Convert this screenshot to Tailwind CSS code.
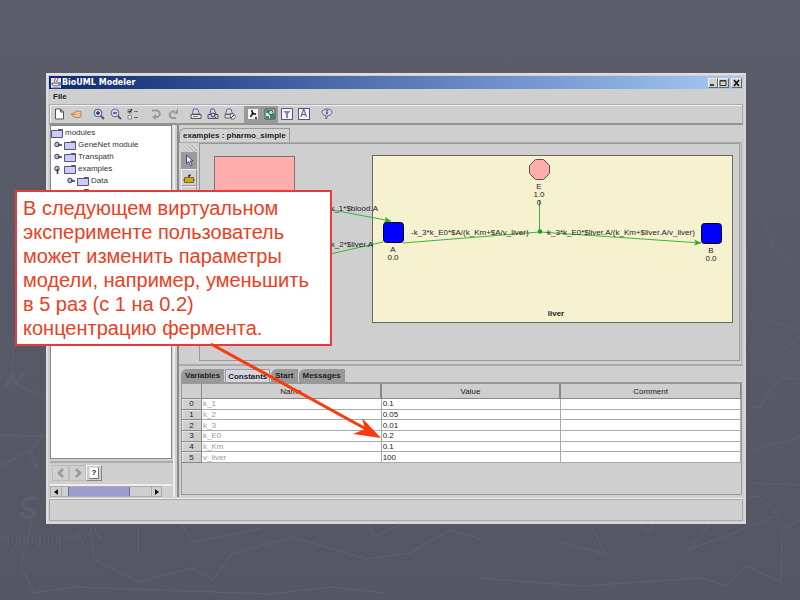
<!DOCTYPE html>
<html lang="ru">
<head>
    <meta charset="UTF-8"/>
    <meta name="viewport" content="width=device-width, initial-scale=1.0"/>
    <script src="https://cdn.jsdelivr.net/npm/@tailwindcss/browser@4"></script>
    <title>BioUML Modeler</title>
</head>
<body class="relative min-h-screen flex flex-col overflow-hidden bg-linear-to-b from-[#5c5d6b] to-[#545664] pl-[46px] pr-[54px] pt-[73px] pb-[76px] font-['Liberation_Sans',Arial,sans-serif] text-[8px] leading-[12px] text-[#222]">

<!-- Slide backdrop: faint outlines -->
<svg class="absolute inset-0 w-full h-full" viewBox="0 0 800 600" preserveAspectRatio="xMidYMid slice" fill="none" stroke="#5c5e6d" stroke-width="1.5" aria-hidden="true">
    <path d="M90 520 94 560 138 582 192 568 213 580 232 554 292 537 366 559 410 553 450 530 484 540"/>
    <path d="M138 525 138 552M180 522 193 542 262 528M366 520 374 536 402 524M592 526 605 554 560 542M640 524 648 532 654 524"/>
    <path d="M32 520 21 567 34 593 74 587 270 594 330 587 386 593M480 578 582 586 700 578 727 586 746 566 781 582 782 530 800 520"/>
    <path d="M710 524 688 550 735 532 778 515 758 496 748 497M748 483 800 485M748 452 800 437M748 408 760 407 780 378 800 379M748 352 767 342 784 349 800 338M748 312 800 330"/>
    <path d="M756 128 766 158 760 200 772 246 790 262M30 310 14 340 12 382 46 398M0 466 30 450 38 470 28 455 46 430M0 435 46 436"/>
    <path d="M0 537 8 538M12 552 20 537M40 538 38 549M60 537 60 552M78 533 84 546M95 529 102 540" />
    <path stroke-width="8" stroke-dasharray="1 3" d="M0 539Q55 545 106 526M3 368Q4 350 15 336"/>
    <path stroke-width="4" d="M36 500C34 496 22 498 23 505S35 508 34 514 22 518 21 512"/>
    <path stroke-width="3" d="M5 387 13 374 16 384 24 372"/>
</svg>

<!-- Application window -->
<main class="relative flex-1 flex flex-col bg-[#cfcfcf] border-2 border-[#dedede] border-r-[#d6d6d6] border-b-[#d6d6d6] p-px">
    <header class="flex items-center h-[13px] bg-linear-to-r from-[#0d2a70] via-[#5878b6] to-[#a6caf6] px-px">
        <svg class="w-[12px] h-[12px]" viewBox="0 0 12 12" aria-hidden="true">
            <path fill="#e4e4ea" d="M1 1h10v10H1z"/>
            <path fill="none" stroke="#c33" d="M5 0c2 2-2 3 0 5M8 1c1 1-2 2-1 4"/>
            <path fill="none" stroke="#555a88" d="M2 6h7c0 3-1 3-3 3S2 9 2 6zM9 6h2v2H9M2 11h8"/>
        </svg>
        <h1 class="flex-1 font-['DejaVu_Sans',Verdana,sans-serif] font-bold text-[8px] text-white">BioUML Modeler</h1>
        <div class="flex">
            <button aria-label="Minimize" class="w-[10px] h-[10px] bg-[#d4d0c8] border border-[#eee] border-r-[#666] border-b-[#666]"><svg viewBox="0 0 8 8"><path stroke="#111" stroke-width="1.5" d="M1 6h4"/></svg></button>
            <button aria-label="Maximize" class="w-[11px] h-[10px] bg-[#d4d0c8] border border-[#eee] border-r-[#666] border-b-[#666]"><svg class="h-full" viewBox="0 0 8 8"><path fill="none" stroke="#333" d="M1 1.5h6v5H1zM1 2h6"/></svg></button>
            <button aria-label="Close" class="ml-[2px] w-[11px] h-[10px] bg-[#d4d0c8] border border-[#eee] border-r-[#666] border-b-[#666]"><svg class="h-full" viewBox="0 0 8 8"><path stroke="#111" stroke-width="1.6" d="m2 1 5 6M7 1 2 7"/></svg></button>
        </div>
    </header>

    <nav class="h-[15px] px-1 flex items-center font-bold">
        <button>File</button>
    </nav>

    <!-- Toolbar -->
    <div class="h-[21px] flex items-center gap-[6px] border border-[#aaa] border-b-2 border-b-[#929292] shadow-[inset_1px_1px_#eee]">
        <div class="flex">
            <button aria-label="New" class="w-[17px] h-[17px] flex items-center justify-center">
                <svg class="w-[12px] h-[12px]" viewBox="0 0 12 12"><path fill="#fff" stroke="#555" d="M2.500 1h5l3 3v7h-8zM7.500 1v3h3"/></svg>
            </button>
            <button aria-label="Open" class="w-[17px] h-[17px] flex items-center justify-center">
                <svg class="w-[12px] h-[12px]" viewBox="0 0 12 12"><path fill="#f0bd8e" stroke="#a77750" stroke-width=".8" d="M1 6l4-1.500 1-1.500 5 .5V9L9 9.500H5L2.500 8z"/><path stroke="#a77750" stroke-width=".6" d="M2 6.500h4"/></svg>
            </button>
        </div>
        <div class="flex">
            <button aria-label="Zoom in" class="w-[17px] h-[17px] flex items-center justify-center">
                <svg class="w-[12px] h-[12px]" viewBox="0 0 12 12"><circle cx="5" cy="5" r="3.900" fill="#d3d3f2" stroke="#5c5c78"/><path stroke="#33336c" stroke-width="1.300" d="M3 5h4M5 3v4"/><path stroke="#54547a" stroke-width="2" d="m8 8 3 3"/></svg>
            </button>
            <button aria-label="Zoom out" class="w-[17px] h-[17px] flex items-center justify-center">
                <svg class="w-[12px] h-[12px]" viewBox="0 0 12 12"><circle cx="5" cy="5" r="3.900" fill="#d3d3f2" stroke="#6c6c84"/><path stroke="#33336c" stroke-width="1.300" d="M3 5h4"/><path stroke="#54547a" stroke-width="2" d="m8 8 3 3"/></svg>
            </button>
            <button aria-label="Options" class="w-[17px] h-[17px] flex items-center justify-center">
                <svg class="w-[12px] h-[12px]" viewBox="0 0 12 12"><path fill="#eee" stroke="#777" stroke-width=".8" d="M1 1.500h3.500V5H1zM1 7.500h3.500V11H1z"/><path fill="none" stroke="#222" stroke-width="1.200" d="m1.500 3 1.200 1.200L5 1"/><path stroke="#66668c" d="M7 3.500h4M7 9.500h4"/></svg>
            </button>
        </div>
        <div class="flex">
            <button aria-label="Undo" class="w-[17px] h-[17px] flex items-center justify-center">
                <svg class="w-[12px] h-[12px]" viewBox="0 0 12 12"><path fill="none" stroke="#999" stroke-width="2" d="M2 2.500h4.500a3.300 3.300 0 0 1 0 6.600H5"/><path fill="#999" d="M6 6v6L2 9z"/></svg>
            </button>
            <button aria-label="Redo" class="w-[17px] h-[17px] flex items-center justify-center">
                <svg class="w-[12px] h-[12px]" viewBox="0 0 12 12"><path fill="none" stroke="#999" stroke-width="2" d="M8 3.500H6a3.300 3.300 0 0 0 0 6.600h3"/><path fill="#999" d="M7 6h4V0z"/></svg>
            </button>
        </div>
        <div class="flex">
            <button aria-label="Print" class="w-[17px] h-[17px] flex items-center justify-center">
                <svg class="w-[12px] h-[12px]" viewBox="0 0 12 12"><path fill="#d6d6f6" stroke="#666684" d="M3.500 1h4l2 5h-7z"/><path fill="#e2e2e2" stroke="#555" d="M1 6.500h10v4H1z"/><path stroke="#888" d="M3 8.500h5"/></svg>
            </button>
            <button aria-label="Print preview" class="w-[17px] h-[17px] flex items-center justify-center">
                <svg class="w-[12px] h-[12px]" viewBox="0 0 12 12"><path fill="#d6d6f6" stroke="#555578" d="M4 1h3l2 5H3z"/><path fill="#ccc" stroke="#555" d="M1 6.500h10v4H1z"/><circle cx="6" cy="7" r="2" fill="#ccccf0" stroke="#446"/><path stroke="#446" d="m7 8 2 2"/></svg>
            </button>
            <button aria-label="Page setup" class="w-[17px] h-[17px] flex items-center justify-center">
                <svg class="w-[12px] h-[12px]" viewBox="0 0 12 12"><path fill="#d6d6f6" stroke="#666684" d="M3 1h4l1.500 5h-7z"/><path fill="#ddd" stroke="#666" d="M1 6.500h8v3.500H1z"/><path fill="#fff" stroke="#444" stroke-width=".8" d="M6 6h4l1.500 2.500L10 11H7z"/><path stroke="#222" d="m7 10 3-3"/></svg>
            </button>
        </div>
        <div class="flex">
            <button aria-label="Diagram" class="w-[17px] h-[17px] flex items-center justify-center bg-[#999]">
                <svg class="w-[12px] h-[12px]" viewBox="0 0 12 12"><path fill="#f2f2f2" d="M1 1h10v10H1z"/><path stroke="#888" stroke-width=".8" d="m5 3 3 3-4 2"/><path fill="#444" d="M4 2h2v2H4zM7 5h2v2H7zM3 7h2v2H3zM8 9h2v2H8z"/></svg>
            </button>
            <button aria-label="Overview" class="w-[17px] h-[17px] flex items-center justify-center bg-[#999]">
                <svg class="w-[12px] h-[12px]" viewBox="0 0 12 12"><path fill="#d8e8e0" stroke="#35583f" d="M1 1h10v10H1z"/><path fill="#3c8a5c" d="M2 2h3v3H2zM6 6h5v5H6zM2 8h3v3H2z"/><circle cx="7" cy="4.500" r="2.300" fill="#c4e0ee" stroke="#345"/></svg>
            </button>
            <button aria-label="Filter" class="w-[17px] h-[17px] flex items-center justify-center">
                <svg class="w-[12px] h-[12px]" viewBox="0 0 12 12"><path fill="#f4f4fb" stroke="#55557c" d="M.5.5h11v11H.5z"/><path fill="#8484b6" d="M2.500 3h7L7 6v4H5V6z"/></svg>
            </button>
            <button aria-label="Annotation" class="w-[17px] h-[17px] flex items-center justify-center">
                <span class="w-[12px] h-[12px] border border-[#55557c] bg-[#f4f4fb] text-[#50507c] text-[10px] leading-[10px]">A</span>
            </button>
        </div>
        <button aria-label="About" class="w-[17px] h-[17px] flex items-center justify-center">
            <svg class="w-[12px] h-[12px]" viewBox="0 0 12 12"><path fill="#d4d4ee" stroke="#626282" d="M6 1c3 0 5 1.200 5 3.200S9 7.500 7 7.500L5 11V7.500C2.500 7.300 1 6 1 4.200S3 1 6 1z"/><path stroke="#33335c" stroke-width="1.300" d="M6 2v1M6 3.600v2.600"/></svg>
        </button>
    </div>

    <div class="flex-1 flex pl-px">
        <!-- Module tree -->
        <aside class="w-[125px] flex flex-col border-r-2 border-[#eee]">
            <ul id="tree" class="flex-1 mr-px pt-px bg-white border border-[#888] overflow-hidden text-[#333]"></ul>
            <div class="h-[22px] mt-[2px] pl-[2px] flex items-center border-t-2 border-[#aaa]">
                <button aria-label="Back" class="w-[17px] h-[16px] flex items-center justify-center border border-[#bcbcbc]"><svg class="w-[10px] h-[10px]" viewBox="0 0 10 10"><path fill="none" stroke="#999" stroke-width="2.500" d="M7 1 3 5l4 4"/></svg></button>
                <button aria-label="Forward" class="w-[17px] h-[16px] flex items-center justify-center border border-[#bcbcbc]"><svg class="w-[10px] h-[10px]" viewBox="0 0 10 10"><path fill="none" stroke="#999" stroke-width="2.500" d="m3 1 4 4-4 4"/></svg></button>
                <button aria-label="Help" class="w-[16px] h-[16px] flex items-center justify-center border border-[#eee] border-r-[#888] border-b-[#888]"><span class="w-[10px] h-[12px] bg-white border border-r-[#777] border-b-[#777] border-[#ddd] font-bold leading-[10px]">?</span></button>
            </div>
            <!-- Horizontal scroll bar -->
            <div class="h-[13px] mt-px mr-px pr-[10px] flex border-t-2 border-[#eee]">
                <button aria-label="Scroll left" class="w-[12px] flex items-center justify-center border border-[#aaa]"><svg class="w-[6px] h-[6px]" viewBox="0 0 6 6"><path fill="#111" d="M5 0v6L1 3z"/></svg></button>
                <div class="flex-1 px-[6px] border-y border-[#aaa]"><div class="w-[62px] h-full bg-[#9c9cce] border-x border-[#6c6ca4]"></div></div>
                <button aria-label="Scroll right" class="w-[11px] flex items-center justify-center border border-[#aaa]"><svg class="w-[6px] h-[6px]" viewBox="0 0 6 6"><path fill="#111" d="M1 0v6l4-3z"/></svg></button>
            </div>
        </aside>

        <section class="flex-1 min-w-0 flex flex-col ml-[2px] border-l-2 border-[#8a8a8a]">
            <!-- Diagram editor -->
            <div class="pt-[3px] flex">
                <button class="h-[14px] px-[3px] bg-[#d2d2d2] font-bold border border-b-0 border-[#999] rounded-tl-md">examples : pharmo_simple</button>
            </div>
            <div class="flex-1 flex mr-px pr-px pb-[2px] border-t border-r border-[#aaa]">
                <div class="w-[20px] pl-[2px] pt-[2px] flex flex-col">
                    <div class="h-[7px] w-[16px] bg-[repeating-linear-gradient(45deg,#bbb_0_1px,#d4d4d4_1px_3px)]"></div>
                    <button aria-label="Select" class="w-[16px] h-[17px] flex items-center justify-center bg-[#9a9a9a]"><svg class="w-[12px] h-[13px]" viewBox="0 0 12 13"><path fill="#eef" stroke="#44447c" d="M3.500 1v8.500l2-1.800 2 4 1.700-.8-2-3.900H10z"/></svg></button>
                    <button aria-label="Add compartment" class="w-[16px] h-[17px] flex items-center justify-center border border-[#eee] border-r-[#999] border-b-[#999]"><svg class="w-[12px] h-[12px]" viewBox="0 0 12 12"><path fill="#d8a21c" stroke="#6a5210" stroke-width=".8" d="M1.500 5.500h9v5h-9z"/><path stroke="#6a5210" d="M0 8h2M10 8h2M5.500 5.500V3H8"/></svg></button>
                    <button aria-label="Add reaction" class="w-[16px] h-[17px] border border-[#eee] border-r-[#999] border-b-[#999]"></button>
                </div>
                <div class="flex-1 min-w-0 border border-[#999] overflow-hidden">
                    <svg class="w-full h-[216px]" font-size="8" fill="#222">
                        <defs>
                            <marker id="arrow" markerUnits="userSpaceOnUse" markerWidth="8" markerHeight="8" refX="7" refY="3.500" orient="auto"><path fill="#22a822" d="M0 0.500 7 3.500 0 6.500 2 3.500z"/></marker>
                        </defs>
                        <rect x="14.500" y="12.500" width="80" height="166" fill="#ffadad" stroke="#777"/>
                        <rect x="172.500" y="11.500" width="360" height="167" fill="#f6f2cf" stroke="#666"/>
                        <g fill="none" stroke="#36b836">
                            <path marker-end="url(#arrow)" d="M95 59 191 77"/>
                            <path d="M95 118 183 98"/>
                            <path d="M203 99 340 88"/>
                            <path marker-end="url(#arrow)" d="M340 88 501 99"/>
                            <path d="M339.500 56v32"/>
                        </g>
                        <circle cx="340" cy="87.500" r="2.200" fill="#1a9c1a"/>
                        <path fill="#ffadad" stroke="#6b4a4a" d="M335.500 15.500h8l6 6v8l-6 6h-8l-6-6v-8z" stroke-linejoin="round"/>
                        <rect x="183.500" y="78.500" width="20" height="20" rx="3" fill="#00f" stroke="#002"/>
                        <rect x="501.500" y="79.500" width="20" height="20" rx="3" fill="#00f" stroke="#002"/>
                        <g text-anchor="middle">
                            <text x="339" y="45">E</text>
                            <text x="339" y="53">1.0</text>
                            <text x="339" y="61">0</text>
                            <text x="193" y="108">A</text>
                            <text x="193" y="116">0.0</text>
                            <text x="511" y="109">B</text>
                            <text x="511" y="117">0.0</text>
                            <text x="356" y="172" font-weight="bold">liver</text>
                        </g>
                        <text x="178" y="67" text-anchor="end">k_1*$blood.A</text>
                        <text x="173" y="103" text-anchor="end">k_2*$liver.A</text>
                        <text x="211" y="91">-k_3*k_E0*$A/(k_Km+$A/v_liver)</text>
                        <text x="347" y="91">k_3*k_E0*$liver.A/(k_Km+$liver.A/v_liver)</text>
                    </svg>
                </div>
            </div>

            <!-- Simulation parameters -->
            <div class="h-[133px] flex flex-col mt-px border-t-2 border-[#aaa] pt-[3px] pl-[2px] pr-px pb-[2px]">
                <div class="flex items-end gap-px font-bold">
                    <button class="h-[13px] px-[4px] bg-[#999] rounded-tl-md">Variables</button>
                    <button class="h-[13px] px-[2px] bg-[#d6d6de] border border-[#9a9ab4] border-b-0 leading-[11px]">Constants</button>
                    <button class="h-[13px] px-[4px] bg-[#999] rounded-tl-md">Start</button>
                    <button class="h-[13px] px-[4px] bg-[#999] rounded-tl-md">Messages</button>
                </div>
                <div class="flex-1 border border-[#999] border-t-2">
                    <table class="w-full h-[79px] table-fixed border-separate border-spacing-0 leading-[9px]">
                        <thead>
                        <tr class="h-[15px]">
                            <th class="w-[20px] border-r border-b border-[#888]"></th>
                            <th class="font-normal border-r-2 border-b border-[#888]">Name</th>
                            <th class="font-normal border-r-2 border-b border-[#888]">Value</th>
                            <th class="font-normal border-r border-b border-[#888]">Comment</th>
                        </tr>
                        </thead>
                        <tbody id="constants"></tbody>
                    </table>
                </div>
            </div>
        </section>
    </div>

    <footer class="h-[22px] mt-[2px] border border-[#aaa] shadow-[0_-1px_#eee]"></footer>
</main>

<!-- Slide note and its pointer -->
<p class="absolute left-[15px] top-[190px] w-[317px] border-2 border-[#e8393b] bg-white px-[6px] pt-[4px] pb-[4px] text-[20px] leading-[24px] text-[#ea4022]">
    В следующем виртуальном<br/>эксперименте пользователь<br/>может изменить параметры<br/>модели, например, уменьшить<br/>в 5 раз (с 1 на 0.2)<br/>концентрацию фермента.
</p>
<svg class="absolute left-[200px] top-[340px] w-[190px] h-[110px]" viewBox="0 0 190 110" aria-hidden="true">
    <path stroke="#fa3a0a" stroke-width="3" d="M11 4 166 89"/>
    <path fill="#fa3a0a" d="M181 98 153 94 165 89 162 78z"/>
</svg>

<script>
    const modules = [
        {name: 'modules', level: 0},
        {name: 'GeneNet module', level: 1},
        {name: 'Transpath', level: 1},
        {name: 'examples', level: 1, open: true},
        {name: 'Data', level: 2},
        {name: 'Diagrams', level: 2},
    ];
    const constants = [
        ['k_1', '0.1'],
        ['k_2', '0.05'],
        ['k_3', '0.01'],
        ['k_E0', '0.2'],
        ['k_Km', '0.1'],
        ['v_liver', '100'],
    ];
    const indents = ['', 'pl-[2px]', 'pl-[15px]'];

    const folder = '<svg class="w-[12px] h-[11px]" viewBox="0 0 12 11"><path fill="#ccccf8" stroke="#55557c" d="M.5 2.500h6l1-1h4v8H.5z"/><path fill="#55557c" d="M7 1h4v2H7z"/></svg>';

    function handle(open) {
        const d = open ? 'M4.500 5v5' : 'M5 5h4';
        return `<svg class="w-[11px] h-[11px]" viewBox="0 0 11 11"><circle cx="4" cy="4.500" r="2.300" fill="#b8b8d8" stroke="#44445c"/><path stroke="#33334c" stroke-width="1.500" d="${d}"/></svg>`;
    }

    document.getElementById('tree').innerHTML = modules.map(({name, level, open}) =>
        `<li class="flex items-center h-[12px] ${indents[level]}">${level ? handle(open) : ''}${folder}<span class="ml-[2px]">${name}</span></li>`
    ).join('');

    document.getElementById('constants').innerHTML = constants.map(([name, value], i) => `
        <tr>
            <th class="font-normal border-r border-b border-[#888] shadow-[inset_1px_1px_#e4e4e4]">${i}</th>
            <td class="bg-white border-r border-b border-[#aaa] pl-px text-[#999]">${name}</td>
            <td class="bg-white border-r border-b border-[#aaa] pl-px">${value}</td>
            <td class="bg-white border-r border-b border-[#aaa]"></td>
        </tr>`).join('');
</script>
</body>
</html>
